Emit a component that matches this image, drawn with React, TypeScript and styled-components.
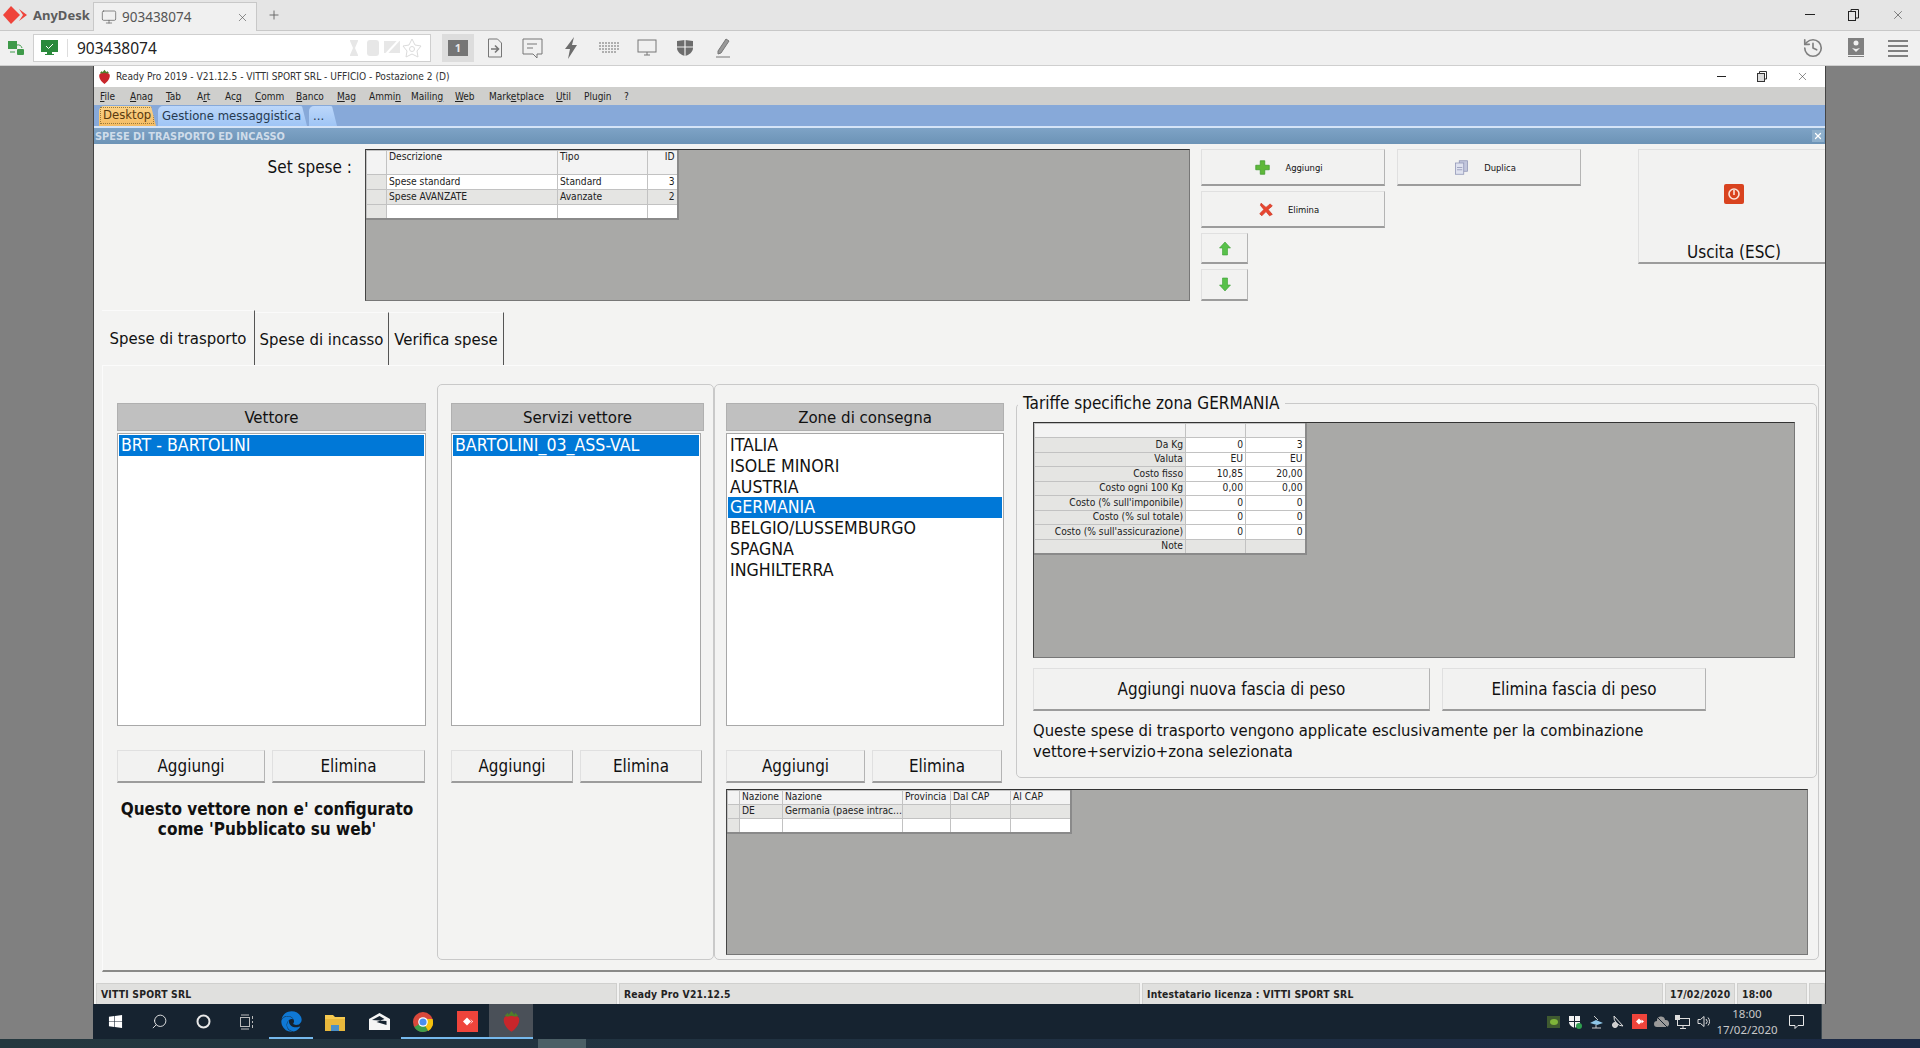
import React from 'react';
import styled, { createGlobalStyle } from 'styled-components';
import { History, Monitor, Plus, Search, X } from 'lucide-react';
import { FaEdge, FaWindows } from 'react-icons/fa';

const ui = '"DejaVu Sans Condensed", "Noto Sans", sans-serif';

const GlobalStyle = createGlobalStyle`
  html, body { margin: 0; padding: 0; height: 100%; overflow: hidden; }
  body { font-family: ${ui}; color: #111; }
  * { box-sizing: border-box; }
`;

// ---------- small drawings

const Berry = ({ size = 14 }: { size?: number }) => (
  <svg width={size} height={size * 1.2} viewBox="0 0 20 24">
    <path d="M10 23C5 20 1 14 2 9c1-3 5-4 8-3 3-1 7 0 8 3 1 5-3 11-8 14z" fill="#c8262b" />
    <path d="M3 6l3-3 1 2 3-4 3 4 1-2 3 3-3 1-4-1-4 1z" fill="#4f7f2a" />
  </svg>
);

const AnyLogo = ({ w = 24, h = 20 }: { w?: number; h?: number }) => (
  <svg width={w} height={h} viewBox="0 0 24 20">
    <polygon points="0,10 8,1 17,10 8,19" fill="#ef443b" />
    <polygon points="16,4 24,10 16,16 20,10" fill="#ef443b" />
  </svg>
);

const Glyph = ({ w = 20, h = 20, children }: { w?: number; h?: number; children: React.ReactNode }) => (
  <svg width={w} height={h} viewBox="0 0 20 20" fill="none">{children}</svg>
);

const PlusIcon = () => (
  <Glyph w={15} h={15}>
    <path d="M7 1h6v6h6v6h-6v6H7v-6H1V7h6z" fill="#5fb83a" stroke="#3f9a2b" />
  </Glyph>
);
const CrossIcon = () => (
  <Glyph w={14} h={17}>
    <path d="M3 1l7 6 6-5 3 3-6 5 6 7-4 2-5-6-6 6-3-3 6-6-5-6z" fill="#e8452f" stroke="#c9331f" />
  </Glyph>
);
const CopyIcon = () => (
  <Glyph w={15} h={17}>
    <rect x="7" y="1" width="11" height="14" fill="#c2c6dc" stroke="#8d93b4" />
    <rect x="2" y="4" width="11" height="15" fill="#dfe2ef" stroke="#8d93b4" />
    <path d="M4 10h7M4 13h7" stroke="#8d93b4" />
  </Glyph>
);
const ArrowIcon = ({ down }: { down?: boolean }) => (
  <svg width="12" height="15" viewBox="0 0 12 15" style={down ? { transform: 'rotate(180deg)' } : undefined}>
    <path d="M6 1l5.5 6H8.5v7h-5V7H.5z" fill="#58c14a" stroke="#3d9f35" strokeWidth=".6" />
  </svg>
);
const PowerIcon = () => (
  <svg width="20" height="20" viewBox="0 0 20 20">
    <rect width="20" height="20" rx="2" fill="#d9431f" />
    <circle cx="10" cy="10" r="5" fill="none" stroke="#fbe4da" strokeWidth="1.6" />
    <path d="M10 6v5" stroke="#fbe4da" strokeWidth="1.6" />
  </svg>
);

// ---------- AnyDesk chrome

const Page = styled.div`
  width: 1920px;
  height: 1048px;
  display: flex;
  flex-direction: column;
  background: #808080;
  overflow: hidden;
`;

const TabStrip = styled.div`
  height: 31px;
  flex: none;
  display: flex;
  align-items: flex-end;
  background: #e5e5e5;
  border-bottom: 1px solid #c8c8c8;
`;

const Brand = styled.div`
  width: 93px;
  height: 30px;
  display: flex;
  align-items: center;
  gap: 6px;
  padding-left: 3px;
  font: bold 13px "Noto Sans", sans-serif;
  color: #5c5c5c;
`;

const SessionTab = styled.div`
  width: 164px;
  height: 29px;
  margin-bottom: -1px;
  display: flex;
  align-items: center;
  gap: 5px;
  padding: 0 7px;
  background: #f0f0f0;
  border: 1px solid #c8c8c8;
  border-bottom: none;
  font: 13.5px "Noto Sans", sans-serif;
  color: #555;
  span { flex: 1; }
`;

const NewTab = styled.div`
  margin-left: 10px;
  height: 30px;
  display: flex;
  align-items: center;
  color: #666;
`;

const Spacer = styled.div`
  flex: 1;
`;

const WinControls = styled.div<{ $w: number; $h: number; $right: number }>`
  display: flex;
  align-items: center;
  height: ${p => p.$h}px;
  width: ${p => p.$w}px;
  justify-content: space-between;
  padding-right: ${p => p.$right}px;
  color: #333;
`;

const ToolBar = styled.div`
  height: 35px;
  flex: none;
  display: flex;
  align-items: center;
  background: #f0f0f0;
  border-bottom: 1px solid #cfcfcf;
`;

const ConnIcon = styled.div`
  width: 33px;
  display: flex;
  padding-left: 8px;
`;

const AddressBox = styled.div`
  width: 398px;
  height: 28px;
  display: flex;
  align-items: center;
  background: #fff;
  border: 1px solid #cfcfcf;
  padding-left: 7px;
`;

const AddressText = styled.div`
  flex: 1;
  margin-left: 9px;
  padding-left: 9px;
  border-left: 1px solid #ddd;
  font: 15.5px/18px "Noto Sans", sans-serif;
  color: #222;
`;

const FadedIcons = styled.div`
  display: flex;
  gap: 1px;
  padding-right: 8px;
  align-items: center;
  opacity: .75;
`;

const ScreenButton = styled.div`
  width: 32px;
  height: 28px;
  margin-left: 11px;
  background: #dddddd;
  display: flex;
  align-items: center;
  justify-content: center;
`;

const ScreenNumber = styled.div`
  width: 20px;
  height: 16px;
  background: #757575;
  color: #e8e8e8;
  font: bold 11px/16px "Noto Sans", sans-serif;
  text-align: center;
`;

const ToolIcons = styled.div`
  display: flex;
  align-items: center;
  margin-left: 2px;
  color: #777;
`;

const ToolSlot = styled.div`
  width: 38px;
  display: flex;
  justify-content: center;
`;

const RightTools = styled.div`
  display: flex;
  align-items: center;
  gap: 24px;
  padding-right: 12px;
  color: #808080;
`;

// ---------- Ready Pro window

const Desk = styled.div`
  flex: 1;
  min-height: 0;
  padding: 0 94px 0 93px;
  display: flex;
  flex-direction: column;
`;

const AppWindow = styled.div`
  flex: 1;
  min-height: 0;
  display: flex;
  flex-direction: column;
  border-left: 1px solid #444;
  border-right: 1px solid #444;
  background: #f3f3f2;
`;

const TitleBar = styled.div`
  height: 21px;
  flex: none;
  display: flex;
  align-items: center;
  background: #fff;
  padding-left: 4px;
  gap: 5px;
  font: 10.1px ${ui};
  color: #333;
`;

const TitleText = styled.div`
  flex: 1;
`;

const MenuBar = styled.div`
  height: 18px;
  flex: none;
  display: flex;
  align-items: center;
  background: #cfcfcd;
  padding-left: 6px;
  font: 10px ${ui};
  color: #222;
`;

const MenuItem = styled.div<{ $w: number }>`
  width: ${p => p.$w}px;
  flex: none;
  u { text-underline-offset: 1px; }
`;

const DocTabs = styled.div`
  height: 23px;
  flex: none;
  display: flex;
  align-items: flex-end;
  background: #87a9d9;
  border-bottom: 2px solid #d5e4f7;
  padding-left: 5px;
  gap: 2px;
`;

const DocTab = styled.div<{ $active?: boolean; $w: number }>`
  width: ${p => p.$w}px;
  height: 20px;
  flex: none;
  padding: ${p => (p.$active ? '1px 0 1px 1px' : '2px 0 0 4px')};
  border-radius: 5px 7px 0 0;
  clip-path: polygon(0 0, calc(100% - 5px) 0, 100% 100%, 0 100%);
  background: ${p => (p.$active ? 'linear-gradient(#fbd38a, #f5bc62)' : 'linear-gradient(#bcd7fa, #9fc5f5)')};
  font: 11.7px/16px "DejaVu Sans", sans-serif;
  white-space: nowrap;
  color: ${p => (p.$active ? '#5a3a10' : '#26394f')};
`;

const FocusBox = styled.div`
  display: inline-block;
  height: 17px;
  padding: 0 2px;
  border: 1px dotted #9a7a3a;
  line-height: 15px;
`;

const Heading = styled.div`
  height: 16px;
  flex: none;
  display: flex;
  align-items: center;
  justify-content: space-between;
  padding: 0 1px;
  background: linear-gradient(#7ea3c6, #6c93b6);
  font: bold 10.9px "DejaVu Sans Condensed", sans-serif;
  color: #cfdcea;
`;

const HeadingClose = styled.div`
  width: 12px;
  height: 12px;
  display: flex;
  align-items: center;
  justify-content: center;
  background: #8fb0cc;
  color: #fff;
`;

const Content = styled.div`
  flex: 1;
  min-height: 0;
  display: flex;
  flex-direction: column;
`;

const TopArea = styled.div`
  height: 166px;
  flex: none;
  padding-top: 5px;
  display: grid;
  grid-template-columns: 271px 825px 448px 187px;
  align-items: start;
`;

const SetLabel = styled.div`
  font-size: 17px;
  line-height: 26px;
  text-align: right;
  padding: 0 13px 0 0;
  margin-top: 5px;
`;

const ActionGrid = styled.div`
  padding-left: 11px;
  display: grid;
  grid-template-columns: 184px 184px;
  grid-template-rows: 37px 37px 31px 32px;
  column-gap: 12px;
  row-gap: 5px;
`;

const ButtonBase = styled.div`
  display: flex;
  align-items: center;
  justify-content: center;
  background: #f2f2f1;
  border: 1px solid #e0e0e0;
  border-right-color: #b4b4b4;
  border-bottom: 2px solid #9c9c9c;
`;

const SmallAction = styled(ButtonBase)`
  gap: 15px;
  padding-right: 8px;
  font-size: 9.4px;
`;

const ArrowAction = styled(ButtonBase)`
  width: 47px;
  grid-column: 1;
`;

const ExitButton = styled(ButtonBase)`
  height: 115px;
  flex-direction: column;
  justify-content: flex-start;
  border-right: none;
  padding: 34px 0 0 4px;
  gap: 38px;
  font-size: 17px;
`;

const TabRow = styled.div`
  height: 55px;
  flex: none;
  display: flex;
  margin-left: 8px;
`;

const PageTab = styled.div<{ $w: number; $active?: boolean }>`
  width: ${p => p.$w}px;
  height: ${p => (p.$active ? 55 : 53)}px;
  margin-top: ${p => (p.$active ? 0 : 2)}px;
  display: flex;
  align-items: center;
  justify-content: center;
  font-size: 16.6px;
  border-right: 1px solid #555;
  border-top: 1px solid #fafafa;
`;

const TabPanel = styled.div`
  flex: 1;
  min-height: 0;
  margin: 0 0 11px 8px;
  padding: 18px 0 0 14px;
  display: flex;
  align-items: flex-start;
  border-left: 1px solid #fbfbfb;
  border-top: 1px solid #fbfbfb;
  border-bottom: 2px solid #8a8a88;
`;

const CarrierColumn = styled.div`
  width: 309px;
  flex: none;
  margin-top: 19px;
  margin-right: 11px;
`;

const Group = styled.div<{ $w: number; $pad: number }>`
  width: ${p => p.$w}px;
  height: 576px;
  flex: none;
  padding: 18px 0 0 ${p => p.$pad}px;
  border: 1px solid #c9c9c9;
  border-radius: 5px;
`;

const ListHeader = styled.div<{ $w?: number }>`
  width: ${p => (p.$w ? `${p.$w}px` : '100%')};
  height: 28px;
  background: #c0c0c0;
  border: 1px solid #b0b0b0;
  display: flex;
  align-items: center;
  justify-content: center;
  font-size: 16.7px;
`;

const ListBox = styled.div<{ $h: number; $w?: number; $mt: number }>`
  width: ${p => (p.$w ? `${p.$w}px` : '100%')};
  height: ${p => p.$h}px;
  margin-top: ${p => p.$mt}px;
  padding: 1px 1px;
  background: #fff;
  border: 1px solid #a8a8a8;
`;

const ListRow = styled.div<{ $selected?: boolean }>`
  height: 20.8px;
  padding-left: 2px;
  font-size: 17.6px;
  line-height: 20.8px;
  white-space: nowrap;
  background: ${p => (p.$selected ? '#0078d7' : 'transparent')};
  color: ${p => (p.$selected ? '#fff' : '#111')};
`;

const ButtonRow = styled.div<{ $mt: number; $gap: number }>`
  display: flex;
  margin-top: ${p => p.$mt}px;
  gap: ${p => p.$gap}px;
`;

const PanelButton = styled(ButtonBase)<{ $w: number; $h?: number }>`
  width: ${p => p.$w}px;
  height: ${p => p.$h ?? 33}px;
  font-size: 16.9px;
`;

const WebNote = styled.div`
  margin: 16px 0 0 -1px;
  width: 302px;
  font-weight: bold;
  font-size: 17px;
  line-height: 20px;
  text-align: center;
`;

const ZoneTop = styled.div`
  display: flex;
  height: 380px;
`;

const ZoneColumn = styled.div`
  width: 278px;
  flex: none;
`;

const TariffBox = styled.fieldset`
  width: 801px;
  height: 385px;
  flex: none;
  margin: -10px 0 0 12px;
  padding: 9px 0 0 16px;
  border: 1px solid #c9c9c9;
  border-radius: 5px;
  min-inline-size: 0;
`;

const TariffLegend = styled.legend`
  margin-left: -15px;
  padding: 0 5px;
  font-size: 17px;
  line-height: 20px;
`;

const TariffButtons = styled.div`
  display: flex;
  gap: 12px;
  margin-top: 10px;
`;

const TariffNote = styled.div`
  margin-top: 9px;
  width: 760px;
  font-size: 16.5px;
  line-height: 21px;
`;

// ---------- data grids

const GridFrame = styled.div<{ $w: number; $h: number; $mt?: number }>`
  width: ${p => p.$w}px;
  height: ${p => p.$h}px;
  margin-top: ${p => p.$mt ?? 0}px;
  flex: none;
  background: #a9a9a7;
  border: 1px solid #777;
  border-top-color: #333;
  border-left-color: #444;
  overflow: hidden;
`;

const Table = styled.table<{ $w: number }>`
  width: ${p => p.$w}px;
  table-layout: fixed;
  border-collapse: collapse;
  font-size: 10.2px;
  color: #222;
  background: #fff;
  border-right: 2px solid #8a8a8a;
  border-bottom: 2px solid #8a8a8a;
`;

const Cell = styled.td<{ $right?: boolean; $tone?: 'head' | 'band' | 'plain' }>`
  padding: 0 2px 0 2px;
  vertical-align: ${p => (p.$tone === 'head' ? 'top' : 'middle')};
  border: 1px solid #c2c2c2;
  text-align: ${p => (p.$right ? 'right' : 'left')};
  white-space: nowrap;
  overflow: hidden;
  line-height: 12px;
  background: ${p => (p.$tone === 'head' ? '#f3f3f3' : p.$tone === 'band' ? '#e5e5e3' : '#fff')};
`;

interface GridProps {
  cols: number[];
  right?: number[];
  rows: { h: number; tone: 'head' | 'band' | 'plain'; cells: string[]; grey?: number[] }[];
}

const DataGrid = ({ cols, right = [], rows }: GridProps) => (
  <Table $w={cols.reduce((a, b) => a + b, 0)}>
    <colgroup>
      {cols.map((c, i) => <col key={i} style={{ width: c }} />)}
    </colgroup>
    <tbody>
      {rows.map((r, i) => (
        <tr key={i} style={{ height: r.h }}>
          {r.cells.map((c, j) => (
            <Cell key={j} $right={right.includes(j)} $tone={r.grey?.includes(j) ? 'band' : r.tone}>{c}</Cell>
          ))}
        </tr>
      ))}
    </tbody>
  </Table>
);

const setCols = [20, 171, 90, 30];
const setRows: GridProps['rows'] = [
  { h: 24, tone: 'head', cells: ['', 'Descrizione', 'Tipo', 'ID'] },
  { h: 15, tone: 'plain', cells: ['', 'Spese standard', 'Standard', '3'], grey: [0] },
  { h: 14.5, tone: 'band', cells: ['', 'Spese AVANZATE', 'Avanzate', '2'] },
  { h: 15, tone: 'plain', cells: ['', '', '', ''], grey: [0] },
];

const tariffRows: GridProps['rows'] = [
  { h: 14, tone: 'head', cells: ['', '', ''] },
  ...[
    ['Da Kg', '0', '3'],
    ['Valuta', 'EU', 'EU'],
    ['Costo fisso', '10,85', '20,00'],
    ['Costo ogni 100 Kg', '0,00', '0,00'],
    ["Costo (% sull'imponibile)", '0', '0'],
    ['Costo (% sul totale)', '0', '0'],
    ["Costo (% sull'assicurazione)", '0', '0'],
  ].map(cells => ({ h: 14.5, tone: 'plain' as const, cells, grey: [0] })),
  { h: 14.5, tone: 'band', cells: ['Note', '', ''] },
];

const capRows: GridProps['rows'] = [
  { h: 13.5, tone: 'head', cells: ['', 'Nazione', 'Nazione', 'Provincia', 'Dal CAP', 'Al CAP'] },
  { h: 14, tone: 'band', cells: ['', 'DE', 'Germania (paese intrac...', '', '', ''] },
  { h: 15, tone: 'plain', cells: ['', '', '', '', '', ''], grey: [0] },
];

const zones = ['ITALIA', 'ISOLE MINORI', 'AUSTRIA', 'GERMANIA', 'BELGIO/LUSSEMBURGO', 'SPAGNA', 'INGHILTERRA'];

// label, column width, position of the underlined letter (-1 for none)
const menus: [string, number, number][] = [
  ['File', 30, 0], ['Anag', 36, 0], ['Tab', 31, 0], ['Art', 28, 1], ['Acq', 30, 2], ['Comm', 41, 0], ['Banco', 41, 0],
  ['Mag', 32, 0], ['Ammin', 42, 4], ['Mailing', 44, 6], ['Web', 34, 0], ['Marketplace', 67, 4], ['Util', 28, 0], ['Plugin', 40, -1], ['?', 10, -1],
];

// ---------- status + taskbar

const StatusBar = styled.div`
  height: 21px;
  flex: none;
  display: flex;
  gap: 2px;
  padding-left: 2px;
  font: bold 10.3px "DejaVu Sans Condensed", sans-serif;
  letter-spacing: .2px;
  color: #222;
`;

const StatusCell = styled.div<{ $w: number }>`
  width: ${p => p.$w}px;
  flex: none;
  padding: 3px 0 0 4px;
  background: #e0e0de;
  border: 1px solid #d0d0ce;
  border-bottom: none;
  line-height: 14px;
  white-space: nowrap;
`;

const Taskbar = styled.div`
  height: 35px;
  flex: none;
  margin-right: 4px;
  display: flex;
  align-items: stretch;
  background: #162330;
  border-right: 1px solid #3a4750;
  color: #e8e8e8;
`;

const TaskItem = styled.div<{ $on?: boolean; $run?: boolean }>`
  width: 44px;
  flex: none;
  display: flex;
  align-items: center;
  justify-content: center;
  background: ${p => (p.$on ? '#4a5058' : 'transparent')};
  box-shadow: ${p => (p.$run ? 'inset 0 -2px 0 #76b9ed' : 'none')};
`;

const Tray = styled.div`
  margin-left: auto;
  display: flex;
  align-items: center;
  gap: 6px;
  padding-right: 17px;
`;

const TraySlot = styled.div`
  width: 15.5px;
  display: flex;
  justify-content: center;
`;

const Clock = styled.div`
  width: 70px;
  margin: 0 1px 0 -6px;
  text-align: center;
  font: 11.5px/16px "Noto Sans", sans-serif;
  color: #c8c8c8;
`;

const BottomStrip = styled.div`
  height: 9px;
  flex: none;
  display: flex;
  background: linear-gradient(90deg, #24383f, #1f2f42 60%, #1c2a46);
  overflow: hidden;
`;

const StripThumb = styled.div`
  width: 48px;
  margin-left: 538px;
  background: #4b5f66;
`;

const StripClock = styled.div`
  margin-left: 1232px;
  padding-top: 5px;
  font: 11.5px/16px "Noto Sans", sans-serif;
  color: #c8c8c8;
`;

export default function App() {
  return (
    <Page>
      <GlobalStyle />
      <TabStrip>
        <Brand><AnyLogo />AnyDesk</Brand>
        <SessionTab>
          <Monitor size={16} strokeWidth={1} />
          <span>903438074</span>
          <X size={13} strokeWidth={1.2} />
        </SessionTab>
        <NewTab><Plus size={14} strokeWidth={1.6} /></NewTab>
        <Spacer />
        <WinControls $w={115} $h={30} $right={15}>
          <svg width="11" height="2"><rect width="10" height="1" y="0" fill="#222" /></svg>
          <svg width="11" height="12" viewBox="0 0 11 12" fill="none" stroke="#222"><rect x=".5" y="2.5" width="7" height="9" /><path d="M3 2V.5h7.5v8.5H8" /></svg>
          <X size={14} strokeWidth={1} />
        </WinControls>
      </TabStrip>

      <ToolBar>
        <ConnIcon>
          <svg width="16" height="16" viewBox="0 0 16 16">
            <rect x="0" y="1" width="9" height="8" fill="#3f9a4a" />
            <path d="M2 12h5M9 5a4 4 0 0 1 5 3" stroke="#3f9a4a" fill="none" />
            <rect x="9" y="9" width="7" height="6" rx="1" fill="#3f9a4a" />
          </svg>
        </ConnIcon>
        <AddressBox>
          <svg width="17" height="16" viewBox="0 0 17 16">
            <rect width="17" height="12" fill="#2a8a3c" />
            <path d="M5 6l2.5 2.5L12 4" stroke="#fff" fill="none" />
            <rect x="6" y="12" width="5" height="2" fill="#2a8a3c" />
            <rect x="4" y="14" width="9" height="1" fill="#2a8a3c" />
          </svg>
          <AddressText>903438074</AddressText>
          <FadedIcons>
            <svg width="18" height="18" viewBox="0 0 18 18" fill="#e0e0e0"><path d="M5 1h8v1l-3 7 3 7v1H5v-1l3-7-3-7z" /></svg>
            <svg width="18" height="18" viewBox="0 0 18 18" fill="#e0e0e0"><rect x="3" y="1" width="12" height="16" rx="3" /></svg>
            <svg width="18" height="18" viewBox="0 0 18 18"><rect x="1" y="2" width="16" height="12" fill="#e0e0e0" /><path d="M3 15L16 1" stroke="#fff" strokeWidth="2" /></svg>
            <svg width="20" height="20" viewBox="0 0 20 20" fill="none" stroke="#cfcfcf"><path d="M10 1l3 6 6 1-4 5 1 6-6-3-6 3 1-6-4-5 6-1z" /><circle cx="10" cy="11" r="2.5" /></svg>
          </FadedIcons>
        </AddressBox>
        <ScreenButton><ScreenNumber>1</ScreenNumber></ScreenButton>
        <ToolIcons>
          <ToolSlot><svg width="16" height="20" viewBox="0 0 16 20" fill="none" stroke="#777"><path d="M1.5 1h9l4 4v14h-13z" /><path d="M4 11h7M8 7.5l3.5 3.5L8 14.500" strokeWidth="1.6" /></svg></ToolSlot>
          <ToolSlot><svg width="22" height="22" viewBox="0 0 22 22" fill="none" stroke="#777"><path d="M1 2h19v15h-5v4l-4-4H1z" /><path d="M5 7h10M5 11h6" /></svg></ToolSlot>
          <ToolSlot><svg width="14" height="24" viewBox="0 0 14 24" fill="#6d6d6d"><path d="M10 1L1 13h5l-2 10 9-14H8z" /></svg></ToolSlot>
          <ToolSlot><svg width="22" height="14" viewBox="0 0 22 14" fill="none" stroke="#999" strokeDasharray="2 1"><path d="M1 2h20M1 5h20M1 8h20M4 11h14" strokeWidth="1.6" /></svg></ToolSlot>
          <ToolSlot><svg width="20" height="20" viewBox="0 0 20 20" fill="none" stroke="#777"><rect x="1" y="2" width="18" height="12" /><path d="M7 17h6M10 14v3" /></svg></ToolSlot>
          <ToolSlot><svg width="18" height="18" viewBox="0 0 18 18" fill="#6d6d6d"><path d="M1 2l8-1 8 1v7c0 4-4 7-8 8-4-1-8-4-8-8z" /><path d="M9 1v16M1 8h16" stroke="#f0f0f0" strokeWidth="1.2" /></svg></ToolSlot>
          <ToolSlot><svg width="16" height="20" viewBox="0 0 16 20" fill="none" stroke="#777"><path d="M11 1l3 2-8 12-3 1 0-3z" fill="#999" /><path d="M1 19h14" /></svg></ToolSlot>
        </ToolIcons>
        <Spacer />
        <RightTools>
          <History size={22} strokeWidth={1.8} />
          <svg width="16" height="20" viewBox="0 0 16 20">
            <path d="M0 0h16v17H0z" fill="#808080" />
            <circle cx="8" cy="5" r="2.500" fill="#f0f0f0" />
            <path d="M4 10l4 4 4-4-4 1z" fill="#f0f0f0" />
            <rect y="18" width="16" height="1" fill="#808080" />
          </svg>
          <svg width="20" height="17" viewBox="0 0 20 17" fill="#808080"><rect width="20" height="2" /><rect y="5" width="20" height="2" /><rect y="10" width="20" height="2" /><rect y="15" width="20" height="2" /></svg>
        </RightTools>
      </ToolBar>

      <Desk>
        <AppWindow>
          <TitleBar>
            <Berry size={13} />
            <TitleText>Ready Pro 2019 - V21.12.5 - VITTI SPORT SRL - UFFICIO - Postazione 2 (D)</TitleText>
            <WinControls $w={108} $h={21} $right={16}>
              <svg width="11" height="2"><rect width="9" height="1" fill="#222" /></svg>
              <svg width="10" height="11" viewBox="0 0 10 11" fill="none" stroke="#333"><rect x=".5" y="2.500" width="7" height="8" fill="#ddd" /><path d="M2.500 2V.5h7v7.500H8" /></svg>
              <X size={13} strokeWidth={1} />
            </WinControls>
          </TitleBar>
          <MenuBar>
            {menus.map(([m, w, u]) => (
              <MenuItem key={m} $w={w}>
                {u < 0 ? m : <>{m.slice(0, u)}<u>{m[u]}</u>{m.slice(u + 1)}</>}
              </MenuItem>
            ))}
          </MenuBar>
          <DocTabs>
            <DocTab $active $w={57}><FocusBox>Desktop</FocusBox></DocTab>
            <DocTab $w={149}>Gestione messaggistica</DocTab>
            <DocTab $w={28}>...</DocTab>
          </DocTabs>
          <Heading>
            SPESE DI TRASPORTO ED INCASSO
            <HeadingClose><X size={10} strokeWidth={3} /></HeadingClose>
          </Heading>
          <Content>
            <TopArea>
              <SetLabel>Set spese :</SetLabel>
              <GridFrame $w={825} $h={152}>
                <DataGrid cols={setCols} right={[3]} rows={setRows} />
              </GridFrame>
              <ActionGrid>
                <SmallAction><PlusIcon />Aggiungi</SmallAction>
                <SmallAction><CopyIcon />Duplica</SmallAction>
                <SmallAction><CrossIcon />Elimina</SmallAction>
                <span />
                <ArrowAction><ArrowIcon /></ArrowAction>
                <ArrowAction><ArrowIcon down /></ArrowAction>
              </ActionGrid>
              <ExitButton><PowerIcon />Uscita (ESC)</ExitButton>
            </TopArea>

            <TabRow>
              <PageTab $w={153} $active>Spese di trasporto</PageTab>
              <PageTab $w={134}>Spese di incasso</PageTab>
              <PageTab $w={115}>Verifica spese</PageTab>
            </TabRow>

            <TabPanel>
              <CarrierColumn>
                <ListHeader>Vettore</ListHeader>
                <ListBox $h={293} $mt={2}>
                  <ListRow $selected>BRT - BARTOLINI</ListRow>
                </ListBox>
                <ButtonRow $mt={24} $gap={7}>
                  <PanelButton $w={148}>Aggiungi</PanelButton>
                  <PanelButton $w={153}>Elimina</PanelButton>
                </ButtonRow>
                <WebNote>Questo vettore non e' configurato<br />come 'Pubblicato su web'</WebNote>
              </CarrierColumn>

              <Group $w={277} $pad={13}>
                <ListHeader $w={253}>Servizi vettore</ListHeader>
                <ListBox $w={250} $h={293} $mt={2}>
                  <ListRow $selected>BARTOLINI_03_ASS-VAL</ListRow>
                </ListBox>
                <ButtonRow $mt={24} $gap={7}>
                  <PanelButton $w={122}>Aggiungi</PanelButton>
                  <PanelButton $w={122}>Elimina</PanelButton>
                </ButtonRow>
              </Group>

              <Group $w={1105} $pad={11}>
                <ZoneTop>
                  <ZoneColumn>
                    <ListHeader>Zone di consegna</ListHeader>
                    <ListBox $h={293} $mt={2}>
                      {zones.map(z => <ListRow key={z} $selected={z === 'GERMANIA'}>{z}</ListRow>)}
                    </ListBox>
                    <ButtonRow $mt={24} $gap={7}>
                      <PanelButton $w={139}>Aggiungi</PanelButton>
                      <PanelButton $w={130}>Elimina</PanelButton>
                    </ButtonRow>
                  </ZoneColumn>
                  <TariffBox>
                    <TariffLegend>Tariffe specifiche zona GERMANIA</TariffLegend>
                    <GridFrame $w={762} $h={236}>
                      <DataGrid cols={[151, 60, 60]} right={[0, 1, 2]} rows={tariffRows} />
                    </GridFrame>
                    <TariffButtons>
                      <PanelButton $w={397} $h={43}>Aggiungi nuova fascia di peso</PanelButton>
                      <PanelButton $w={264} $h={43}>Elimina fascia di peso</PanelButton>
                    </TariffButtons>
                    <TariffNote>Queste spese di trasporto vengono applicate esclusivamente per la combinazione vettore+servizio+zona selezionata</TariffNote>
                  </TariffBox>
                </ZoneTop>
                <GridFrame $w={1082} $h={166} $mt={6}>
                  <DataGrid cols={[12, 43, 120, 48, 60, 60]} rows={capRows} />
                </GridFrame>
              </Group>
            </TabPanel>

            <StatusBar>
              <StatusCell $w={521}>VITTI SPORT SRL</StatusCell>
              <StatusCell $w={521}>Ready Pro V21.12.5</StatusCell>
              <StatusCell $w={521}>Intestatario licenza : VITTI SPORT SRL</StatusCell>
              <StatusCell $w={70}>17/02/2020</StatusCell>
              <StatusCell $w={70}>18:00</StatusCell>
              <StatusCell $w={16} />
            </StatusBar>
          </Content>
        </AppWindow>
        <Taskbar>
          <TaskItem><FaWindows size={15} color="#fff" /></TaskItem>
          <TaskItem><Search size={17} strokeWidth={1.3} style={{ transform: 'scaleX(-1)' }} /></TaskItem>
          <TaskItem>
            <svg width="15" height="15" viewBox="0 0 15 15" fill="none" stroke="#e8e8e8" strokeWidth="2"><circle cx="7.500" cy="7.500" r="6" /></svg>
          </TaskItem>
          <TaskItem>
            <svg width="14" height="16" viewBox="0 0 14 16" fill="none" stroke="#bbb"><rect x=".5" y="3.500" width="9" height="9" /><path d="M1 1h8M1 15h8M12.500 2v3M12.500 7v2M12.500 11v3" /></svg>
          </TaskItem>
          <TaskItem $run><FaEdge size={21} color="#0f78d4" /></TaskItem>
          <TaskItem>
            <svg width="20" height="18" viewBox="0 0 20 18"><path d="M0 2h8l2 2h10v14H0z" fill="#f6c94f" /><rect x="0" y="6" width="20" height="12" fill="#e8b83c" /><rect x="6" y="12" width="8" height="6" fill="#4a90c8" /></svg>
          </TaskItem>
          <TaskItem>
            <svg width="21" height="17" viewBox="0 0 21 17"><path d="M0 6L10.500 0 21 6v11H0z" fill="#f5f5f5" /><path d="M3 7l7.500-4 5 3-8 3 10 3v-4" fill="#162330" /></svg>
          </TaskItem>
          <TaskItem $run>
            <svg width="20" height="20" viewBox="0 0 20 20">
              <circle cx="10" cy="10" r="10" fill="#d9483b" />
              <path d="M10 10L1.300 15A10 10 0 0 0 10 20c2 0 4-.6 5-1.400z" fill="#3e9e4a" />
              <path d="M10 10l5.300 9A10 10 0 0 0 19.500 7H10z" fill="#f4c20d" />
              <circle cx="10" cy="10" r="4.800" fill="#fff" />
              <circle cx="10" cy="10" r="3.600" fill="#4a8ef0" />
            </svg>
          </TaskItem>
          <TaskItem $run>
            <svg width="21" height="21" viewBox="0 0 21 21">
              <rect width="21" height="21" fill="#ef443b" />
              <polygon points="6,10.500 10,6.500 14,10.500 10,14.500" fill="#fff" />
              <polygon points="13,7.500 16,10.500 13,13.500 15,10.500" fill="#fff" />
            </svg>
          </TaskItem>
          <TaskItem $on $run><Berry size={19} /></TaskItem>
          <Tray>
            <TraySlot><svg width="13" height="12"><rect width="13" height="12" fill="#3f5a30" /><ellipse cx="7" cy="6" rx="4" ry="3" fill="#7fb53a" /></svg></TraySlot>
            <TraySlot>
              <svg width="14" height="14" viewBox="0 0 14 14"><path d="M1 1h11v6c0 3-3 5-5.500 6C4 12 1 10 1 7z" fill="#f2f2f2" /><path d="M6.500 1v12M1 6.500h11" stroke="#162330" /><circle cx="11" cy="11" r="3" fill="#2f9e4f" /></svg>
            </TraySlot>
            <TraySlot>
              <svg width="15" height="14" viewBox="0 0 15 14"><path d="M1 8l6-3 7 3-6 2z" fill="#8fc7e8" /><path d="M5 1l4 4M7 10v3M3 13h9" stroke="#ccc" fill="none" /></svg>
            </TraySlot>
            <TraySlot>
              <svg width="15" height="15" viewBox="0 0 15 15" fill="none" stroke="#ddd"><path d="M3 2a9 9 0 0 0 9 10" /><path d="M3 2l9 10" /><circle cx="4" cy="11" r="2.500" fill="#ccc" /></svg>
            </TraySlot>
            <TraySlot>
              <svg width="15" height="15" viewBox="0 0 15 15"><rect width="15" height="15" fill="#ef443b" /><polygon points="4,7.500 7,4.500 10,7.500 7,10.500" fill="#fff" /><polygon points="9.500,5.500 12,7.500 9.500,9.500" fill="#fff" /></svg>
            </TraySlot>
            <TraySlot>
              <svg width="15" height="12" viewBox="0 0 15 12"><path d="M3 11a3 3 0 0 1 0-6 4 4 0 0 1 8-1 3.500 3.500 0 0 1 1 7z" fill="#9a9a9a" /><path d="M3 1l10 10" stroke="#162330" /></svg>
            </TraySlot>
            <TraySlot>
              <svg width="15" height="14" viewBox="0 0 15 14" fill="none" stroke="#ddd"><rect x="2.500" y="3.500" width="12" height="7" /><path d="M8 11v2M5 13.500h6" /><rect x="0" y="0" width="5" height="5" fill="#ddd" stroke="none" /></svg>
            </TraySlot>
            <TraySlot>
              <svg width="15" height="13" viewBox="0 0 15 13" fill="none" stroke="#ddd"><path d="M1 4.500h2.500L7 1.500v10l-3.500-3H1z" /><path d="M9 4a3.500 3.500 0 0 1 0 5M11 2.500a6 6 0 0 1 0 8" /></svg>
            </TraySlot>
            <Clock>18:00<br />17/02/2020</Clock>
            <svg width="15" height="14" viewBox="0 0 15 14" fill="none" stroke="#e8e8e8"><path d="M.5.5h14v10H9l-3 3v-3H.5z" /></svg>
          </Tray>
        </Taskbar>
      </Desk>
      <BottomStrip>
        <StripThumb />
        <StripClock>18:00</StripClock>
      </BottomStrip>
    </Page>
  );
}
